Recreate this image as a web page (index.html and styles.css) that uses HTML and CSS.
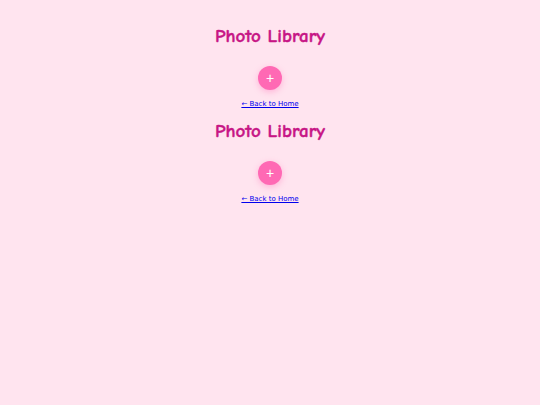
FILE: index.html
```html
<!DOCTYPE html>
<html lang="en">
<head>
    <meta charset="UTF-8">
    <meta name="viewport" content="width=device-width, initial-scale=1.0">
    <title>Photo Library</title>
    <link rel="stylesheet" href="styles.css">
</head>
<body>
    <div class="library">
        <h1>Photo Library</h1>
        <button class="add-btn">+</button>
        <a href="#" class="back-link">&larr; Back to Home</a>
    </div>
    <div class="library">
        <h1>Photo Library</h1>
        <button class="add-btn">+</button>
        <a href="#" class="back-link">&larr; Back to Home</a>
    </div>
</body>
</html>
```

FILE: styles.css
```css
:root {
    --primary-color: #ff69b4;
    --heading-color: #c71585;
    --background-color: #ffe4ef;
}
body {
    font-family: 'Comic Sans MS', 'Comic Neue', cursive;
    background-color: var(--background-color);
    margin: 0;
    padding-top: 24px;
}
.library {
    display: flex;
    flex-direction: column;
    align-items: center;
    margin-bottom: 10px;
}
h1 {
    color: var(--heading-color);
    font-size: 19px;
    font-weight: 800;
    line-height: 24px;
    margin: 0 0 18px;
    -webkit-text-stroke: 0.4px var(--heading-color);
}
.add-btn {
    width: 24px;
    height: 24px;
    border: none;
    border-radius: 50%;
    background-color: var(--primary-color);
    color: white;
    font-size: 14px;
    line-height: 24px;
    padding: 0;
    box-shadow: 0 2px 6px rgba(255, 105, 180, 0.4);
    cursor: pointer;
}
.back-link {
    margin-top: 9px;
    font-family: 'DejaVu Sans', sans-serif;
    font-size: 7px;
    line-height: 10px;
    color: #0000ee;
}
```
